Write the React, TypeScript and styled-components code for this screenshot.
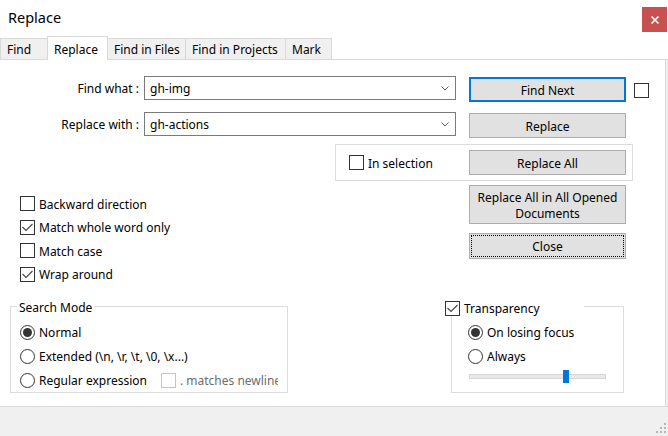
import React from "react";
import styled, { createGlobalStyle, css } from "styled-components";

const GlobalStyle = createGlobalStyle`
  html, body { margin: 0; padding: 0; background: #ffffff; }
  body { font-family: "Noto Sans", "DejaVu Sans", sans-serif; font-size: 12px; color: #000; }
  *, *::before, *::after { box-sizing: border-box; }
`;

const Window = styled.div`
  width: 668px;
  height: 436px;
  display: flex;
  flex-direction: column;
  background: #f0f0f0;
  overflow: hidden;
  font-family: "Noto Sans", "DejaVu Sans", sans-serif;
  font-size: 12px;
  line-height: 16px;
  color: #000;
`;

const TitleBar = styled.div`
  height: 36px;
  flex: none;
  display: flex;
  justify-content: space-between;
  align-items: flex-start;
  background: #fff;
`;

const Title = styled.div`
  margin: 7px 0 0 8px;
  font-size: 14.5px;
  line-height: 20px;
`;

const CloseButton = styled.div`
  width: 25px;
  height: 25px;
  margin: 7px 1px 0 0;
  background: #c75050;
  display: flex;
  align-items: center;
  justify-content: center;
`;

const TabStrip = styled.div`
  height: 24px;
  flex: none;
  display: flex;
  align-items: flex-end;
  background: #fff;
  border-bottom: 1px solid #d9d9d9;
`;

const Tab = styled.div<{ $w: number; $active?: boolean }>`
  width: ${(p) => p.$w}px;
  height: ${(p) => (p.$active ? 24 : 21)}px;
  margin-bottom: ${(p) => (p.$active ? -1 : 0)}px;
  margin-left: -1px;
  &:first-child { margin-left: 0; }
  border: 1px solid #d9d9d9;
  border-bottom: none;
  background: ${(p) => (p.$active ? "#fff" : "#f0f0f0")};
  position: relative;
  z-index: ${(p) => (p.$active ? 1 : 0)};
  display: flex;
  align-items: center;
  padding: 2px 0 0 6px;
  white-space: nowrap;
`;

const Body = styled.div`
  flex: 1;
  min-height: 0;
  display: flex;
`;

const Panel = styled.div`
  width: 666px;
  background: #fff;
  border-right: 1px solid #d9d9d9;
  display: flex;
  flex-direction: column;
  padding-top: 16px;
`;

const FieldRow = styled.div<{ $mt?: number }>`
  display: flex;
  align-items: flex-start;
  height: 26px;
  margin-top: ${(p) => p.$mt ?? 0}px;
`;

const FieldLabel = styled.div`
  width: 139px;
  text-align: right;
  line-height: 24px;
  padding-top: 1px;
  white-space: nowrap;
`;

const Combo = styled.div`
  margin-left: 5px;
  width: 312px;
  height: 24px;
  border: 1px solid #7a7a7a;
  background: #fff;
  display: flex;
  align-items: center;
  justify-content: space-between;
  padding: 0 6px 0 5px;
`;

const Text = styled.span<{ $muted?: boolean; $clip?: number }>`
  display: block;
  padding-top: 2px;
  line-height: 16px;
  white-space: nowrap;
  color: ${(p) => (p.$muted ? "#6d6d6d" : "inherit")};
  ${(p) =>
    p.$clip &&
    css`
      max-width: ${p.$clip}px;
      overflow: hidden;
    `}
`;

const PushButton = styled.div<{ $h?: number; $default?: boolean; $focus?: boolean; $ml?: number; $mt?: number }>`
  width: 157px;
  height: ${(p) => p.$h ?? 25}px;
  flex: none;
  margin-left: ${(p) => p.$ml ?? 0}px;
  margin-top: ${(p) => p.$mt ?? 0}px;
  padding: 2px 4px 0;
  background: #e1e1e1;
  border: ${(p) => (p.$default ? "2px solid #0078d7" : "1px solid #adadad")};
  display: flex;
  align-items: center;
  justify-content: center;
  text-align: center;
  line-height: 16px;
  ${(p) =>
    p.$focus &&
    css`
      outline: 1px dotted #000;
      outline-offset: -3px;
    `}
`;

const SelectionGroup = styled.div`
  margin: 6px 0 0 335px;
  width: 298px;
  height: 37px;
  border: 1px solid #dcdcdc;
  display: flex;
  align-items: center;
  justify-content: space-between;
  padding: 0 6px 0 13px;
`;

const OptionsRow = styled.div`
  margin-top: 4px;
  height: 115px;
  display: flex;
  align-items: flex-start;
`;

const OptionList = styled.div`
  width: 449px;
  margin-left: 20px;
  padding-top: 7px;
  display: flex;
  flex-direction: column;
`;

const ButtonStack = styled.div`
  display: flex;
  flex-direction: column;
  gap: 9px;
`;

const OptionLine = styled.div<{ $h?: number }>`
  height: ${(p) => p.$h ?? 24}px;
  display: flex;
  align-items: center;
  white-space: nowrap;
`;

const Control = styled.div<{ $ml?: number; $mt?: number }>`
  display: flex;
  align-items: center;
  gap: 4px;
  margin-left: ${(p) => p.$ml ?? 0}px;
  margin-top: ${(p) => p.$mt ?? 0}px;
  white-space: nowrap;
`;

const Box = styled.span<{ $disabled?: boolean }>`
  width: 15px;
  height: 15px;
  flex: none;
  border: 1px solid ${(p) => (p.$disabled ? "#c4c4c4" : "#333")};
  background: #fff;
  display: inline-flex;
  align-items: center;
  justify-content: center;
`;

const RadioDot = styled.span<{ $checked?: boolean }>`
  width: 15px;
  height: 15px;
  flex: none;
  border: 1px solid #333;
  border-radius: 50%;
  background: #fff;
  display: inline-flex;
  align-items: center;
  justify-content: center;
  &::after {
    content: "";
    width: 9px;
    height: 9px;
    border-radius: 50%;
    background: #333;
    display: ${(p) => (p.$checked ? "block" : "none")};
  }
`;

const BottomRow = styled.div`
  display: flex;
  align-items: flex-start;
  padding-top: 6px;
`;

const GroupBox = styled.div<{ $w: number; $ml: number; $pl: number }>`
  position: relative;
  margin-left: ${(p) => p.$ml}px;
  width: ${(p) => p.$w}px;
  height: 87px;
  border: 1px solid #dcdcdc;
  padding: 13px 0 0 ${(p) => p.$pl}px;
  display: flex;
  flex-direction: column;
`;

const GroupCaption = styled.div<{ $left: number; $top: number; $w?: number }>`
  position: absolute;
  top: ${(p) => p.$top}px;
  left: ${(p) => p.$left}px;
  ${(p) => (p.$w ? `width: ${p.$w}px;` : "")}
  height: 16px;
  padding: 0 2px;
  background: #fff;
  display: flex;
  align-items: center;
  white-space: nowrap;
`;

const SliderTrack = styled.div`
  position: relative;
  margin: 2px 0 0 1px;
  width: 137px;
  height: 13px;
  &::before {
    content: "";
    position: absolute;
    left: 0;
    right: 0;
    top: 4px;
    height: 5px;
    background: #e7eaea;
    border: 1px solid #d6d6d6;
  }
`;

const SliderThumb = styled.div`
  position: absolute;
  top: 0;
  width: 6px;
  height: 13px;
  background: #0078d7;
`;

const StatusBar = styled.div`
  height: 30px;
  flex: none;
  border-top: 1px solid #dadada;
  background: #f0f0f0;
  display: flex;
  justify-content: flex-end;
  align-items: flex-end;
  padding: 0 1px 1px 0;
`;

const Check = () => (
  <svg width="13" height="13" viewBox="0 0 13 13">
    <polyline points="1.5,6 5,9.5 11.5,3" fill="none" stroke="#444" strokeWidth="1.1" />
  </svg>
);

const Checkbox = ({
  checked,
  disabled,
  label,
  clip,
  ml,
}: {
  checked?: boolean;
  disabled?: boolean;
  label?: string;
  clip?: number;
  ml?: number;
}) => (
  <Control $ml={ml}>
    <Box $disabled={disabled}>{checked && <Check />}</Box>
    {label && (
      <Text $muted={disabled} $clip={clip}>
        {label}
      </Text>
    )}
  </Control>
);

const Radio = ({ checked, label }: { checked?: boolean; label: string }) => (
  <Control>
    <RadioDot $checked={checked} />
    <Text>{label}</Text>
  </Control>
);

const Chevron = () => (
  <svg width="8" height="5" viewBox="0 0 8 5">
    <polyline points="0.5,0.5 4,4 7.5,0.5" fill="none" stroke="#606060" strokeWidth="1" />
  </svg>
);

const Slider = ({ value, max }: { value: number; max: number }) => (
  <SliderTrack>
    <SliderThumb style={{ left: Math.round((value / max) * 131) }} />
  </SliderTrack>
);

const Grip = () => (
  <svg width="12" height="12" viewBox="0 0 12 12">
    {[
      [9, 0],
      [5, 4],
      [9, 4],
      [1, 8],
      [5, 8],
      [9, 8],
    ].map(([x, y]) => (
      <rect key={`${x}-${y}`} x={x} y={y} width="2" height="2" fill="#b5b5b5" />
    ))}
  </svg>
);

const tabs = [
  { label: "Find", w: 48 },
  { label: "Replace", w: 61, active: true },
  { label: "Find in Files", w: 79 },
  { label: "Find in Projects", w: 101 },
  { label: "Mark", w: 47 },
];

const options = [
  { label: "Backward direction", checked: false },
  { label: "Match whole word only", checked: true },
  { label: "Match case", checked: false },
  { label: "Wrap around", checked: true },
];

export default function App() {
  return (
    <>
      <GlobalStyle />
      <Window>
        <TitleBar>
          <Title>Replace</Title>
          <CloseButton>
            <svg width="10" height="10" viewBox="0 0 10 10">
              <path d="M1.5 1.5 L8.5 8.5 M8.5 1.5 L1.5 8.5" stroke="#fff" strokeWidth="1.6" />
            </svg>
          </CloseButton>
        </TitleBar>
        <TabStrip>
          {tabs.map((t) => (
            <Tab key={t.label} $w={t.w} $active={t.active}>
              {t.label}
            </Tab>
          ))}
        </TabStrip>
        <Body>
          <Panel>
            <FieldRow>
              <FieldLabel>Find what :</FieldLabel>
              <Combo>
                <Text>gh-img</Text>
                <Chevron />
              </Combo>
              <PushButton $default $ml={13} $mt={1}>
                Find Next
              </PushButton>
              <Control $ml={8} $mt={7}>
                <Box />
              </Control>
            </FieldRow>
            <FieldRow $mt={10}>
              <FieldLabel>Replace with :</FieldLabel>
              <Combo>
                <Text>gh-actions</Text>
                <Chevron />
              </Combo>
              <PushButton $ml={13} $mt={1}>
                Replace
              </PushButton>
            </FieldRow>
            <SelectionGroup>
              <Checkbox label="In selection" />
              <PushButton>Replace All</PushButton>
            </SelectionGroup>
            <OptionsRow>
              <OptionList>
                {options.map((o) => (
                  <OptionLine key={o.label} $h={23.5}>
                    <Checkbox checked={o.checked} label={o.label} />
                  </OptionLine>
                ))}
              </OptionList>
              <ButtonStack>
                <PushButton $h={39}>Replace All in All Opened Documents</PushButton>
                <PushButton $h={26} $focus>
                  Close
                </PushButton>
              </ButtonStack>
            </OptionsRow>
            <BottomRow>
              <GroupBox $ml={10} $w={278} $pl={9}>
                <GroupCaption $left={6} $top={-8}>
                  <Text>Search Mode</Text>
                </GroupCaption>
                <OptionLine>
                  <Radio checked label="Normal" />
                </OptionLine>
                <OptionLine>
                  <Radio label="Extended (\n, \r, \t, \0, \x...)" />
                </OptionLine>
                <OptionLine>
                  <Radio label="Regular expression" />
                  <Checkbox disabled ml={14} clip={98} label=". matches newline" />
                </OptionLine>
              </GroupBox>
              <GroupBox $ml={163} $w={173} $pl={16}>
                <GroupCaption $left={-9} $top={-7} $w={141}>
                  <Checkbox checked label="Transparency" />
                </GroupCaption>
                <OptionLine>
                  <Radio checked label="On losing focus" />
                </OptionLine>
                <OptionLine>
                  <Radio label="Always" />
                </OptionLine>
                <Slider value={72} max={100} />
              </GroupBox>
            </BottomRow>
          </Panel>
        </Body>
        <StatusBar>
          <Grip />
        </StatusBar>
      </Window>
    </>
  );
}
